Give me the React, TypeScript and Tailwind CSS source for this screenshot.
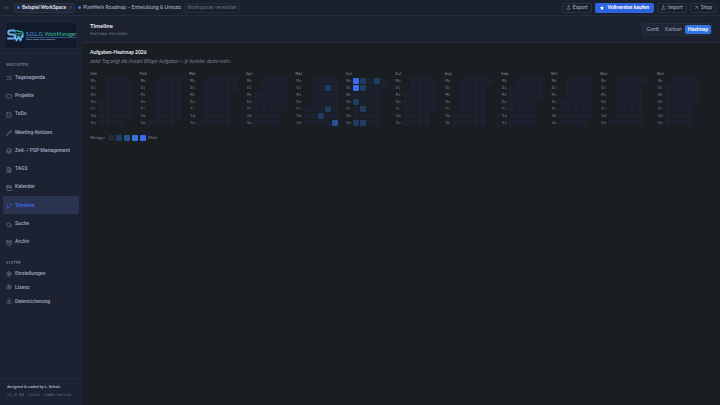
import React, { useState } from 'react';
import {
    Archive,
    ArrowUpRight,
    Calendar,
    Download,
    FileText,
    Folder,
    GitBranch,
    Layers,
    ListChecks,
    type LucideIcon,
    Pencil,
    Search,
    Settings,
    SquareCheck,
    Star,
    Upload,
} from 'lucide-react';

const YEAR = 2026;
const MONTHS = ['Jan', 'Feb', 'Mär', 'Apr', 'Mai', 'Jun', 'Jul', 'Aug', 'Sep', 'Okt', 'Nov', 'Dez'];
const WEEKDAYS = ['Mo', 'Di', 'Mi', 'Do', 'Fr', 'Sa', 'So'];

const LEVELS = ['bg-[#1c212f]', 'bg-[#1f3d61]', 'bg-[#24528c]', 'bg-[#3474dc]', 'bg-[#3b6cf0]'];

// load level per day, keyed by "month-day"
const LOAD: Record<string, number> = {
    '4-16': 1,
    '4-19': 1,
    '4-22': 1,
    '4-31': 2,
    '5-1': 4,
    '5-2': 4,
    '5-4': 1,
    '5-7': 1,
    '5-8': 1,
    '5-9': 1,
    '5-12': 1,
    '5-14': 1,
    '5-22': 1,
};

const VIEWS: { label: string; icon: LucideIcon }[] = [
    { label: 'Tagesagenda', icon: ListChecks },
    { label: 'Projekte', icon: Folder },
    { label: 'ToDo', icon: SquareCheck },
    { label: 'Meeting-Notizen', icon: Pencil },
    { label: 'Zeit- / PSP Management', icon: Layers },
    { label: 'TAGS', icon: FileText },
    { label: 'Kalender', icon: Calendar },
    { label: 'Timeline', icon: GitBranch },
    { label: 'Suche', icon: Search },
    { label: 'Archiv', icon: Archive },
];

const SYSTEM: { label: string; icon: LucideIcon }[] = [
    { label: 'Einstellungen', icon: Settings },
    { label: 'Lizenz', icon: Settings },
    { label: 'Datensicherung', icon: Download },
];

const Logo: React.FC = () => (
    <div className="flex h-[27px] items-center gap-[2px] rounded-[2px] border border-[#1a2236] bg-[#101a2c] pl-[1px]">
        <svg viewBox="0 0 34 26" className="h-[13px] w-[17px] shrink-0" fill="none" strokeLinecap="round" strokeLinejoin="round">
            <path d="M15 3H7C1 3 1 11 7 11h5c6 0 6 8 0 8H2" stroke="#6fb0f2" strokeWidth="4" />
            <path d="M16 6c3-4 7-3 8-1h5c2 0 3 2 3 5v6" stroke="#2fae91" strokeWidth="2.5" />
            <path d="M18 9h13v6H20z" fill="#15434f" stroke="#2fae91" strokeWidth="1.2" />
            <path d="M15 14l4 9 4-7 4 7 4-10" stroke="#6fb0f2" strokeWidth="3.4" />
        </svg>
        <div className="whitespace-nowrap">
            <p className="text-[5px] leading-[6px] text-[#62a6ee]">
                S.O.L.O. <span className="text-[#3cc4a0]">WorkManager</span>
            </p>
            <p className="border-t border-[#2c5c83] text-[2px] leading-[3px] font-bold text-[#a3b5cc]">
                Simple, Offline, Local, Organized
            </p>
        </div>
    </div>
);

const Sidebar: React.FC = () => (
    <aside className="flex w-[83px] shrink-0 flex-col border-r border-[#191f2b] bg-[#1c2232]">
        <div className="border-b border-[#232a3b] px-[5px] pt-[6px] pb-[4px]">
            <Logo />
        </div>
        <h2 className="px-[6px] pt-[9px] font-['DejaVu_Sans_Mono',monospace] text-[4px] leading-[4px] text-[#8791a8]">ANSICHTEN</h2>
        <nav className="mt-[1px] grid h-[183px] auto-rows-fr px-[3px] font-['Roboto',sans-serif]">
            {VIEWS.map(({ label, icon: Icon }) => (
                <a
                    key={label}
                    href={`#${label.toLowerCase()}`}
                    className={
                        label === 'Timeline'
                            ? 'flex items-center gap-[3px] rounded-[2px] bg-[#2a3350] pl-[3px] text-[#3d6cf0]'
                            : 'flex items-center gap-[3px] rounded-[2px] pl-[3px] text-[#a0aac0]'
                    }
                >
                    <Icon className="mt-[2px] size-[6px] opacity-80" />
                    <span className="text-[5px] leading-[7px] font-medium whitespace-nowrap">{label}</span>
                </a>
            ))}
        </nav>
        <h2 className="px-[6px] pt-[10px] font-['DejaVu_Sans_Mono',monospace] text-[4px] leading-[4px] text-[#8791a8]">SYSTEM</h2>
        <nav className="mt-[2px] grid h-[41px] auto-rows-fr px-[3px] font-['Roboto',sans-serif]">
            {SYSTEM.map(({ label, icon: Icon }) => (
                <a key={label} href={`#${label.toLowerCase()}`} className="flex items-center gap-[3px] pl-[3px] text-[#a0aac0]">
                    <Icon className="size-[6px] opacity-80" />
                    <span className="text-[5px] leading-[7px] font-medium">{label}</span>
                </a>
            ))}
        </nav>
        <footer className="mt-auto border-t border-[#232a3b] px-[7px] pt-[5px] pb-[8px] whitespace-nowrap">
            <p className="text-[4px] leading-[6px] font-bold text-[#a9b2c5]">designed &amp; coded by L. Scholz</p>
            <p className="mt-[3px] flex gap-px font-['DejaVu_Sans_Mono',monospace] text-[4px] leading-[4px] text-[#667088]">
                <span>v1.0.50</span>
                <span>·</span>
                <span>local</span>
                <span>·</span>
                <a href="#notice">made-notice</a>
            </p>
        </footer>
    </aside>
);

const ToolButton: React.FC<{ label: string; icon: LucideIcon }> = ({ label, icon: Icon }) => (
    <button className="flex h-[10px] items-center gap-[2px] rounded-[2px] border border-[#2a3142] px-[3px] text-[5px] leading-[7px] font-medium text-[#a9b2c5]">
        <Icon className="size-[5px]" />
        {label}
    </button>
);

const TopBar: React.FC = () => (
    <header className="flex h-[16px] shrink-0 items-center border-b border-[#252c3c] bg-[#1b202d] px-[4px] whitespace-nowrap">
        <span className="w-[10px] font-['DejaVu_Sans_Mono',monospace] text-[4px] text-[#4c556a]">WS:</span>
        <button className="flex h-[10px] items-center gap-[2px] rounded-[2px] border border-[#2c3447] bg-[#212738] px-[2px] text-[5px] leading-[7px] font-bold text-[#e3e8f2]">
            <span className="size-[3px] rounded-full bg-[#3f7cf0]" />
            Beispiel WorkSpace
            <Pencil className="size-[4px] text-[#6d778e]" />
        </button>
        <button className="ml-[3px] flex items-center gap-[2px] text-[5px] leading-[7px] font-medium text-[#a9b2c5]">
            <span className="size-[3px] rounded-full bg-[#3f7cf0]" />
            PlanWerk Roadmap – Entwicklung &amp; Umsatz
        </button>
        <button className="ml-[3px] h-[10px] rounded-[2px] border border-[#242b3a] px-[2px] text-[5px] leading-[7px] text-[#69738a]">
            Workspaces verwalten
        </button>
        <div className="ml-auto flex gap-[3px]">
            <ToolButton label="Export" icon={Upload} />
            <button className="flex h-[10px] items-center gap-[4px] rounded-[2px] bg-[#2f62dd] px-[5px] text-[5px] leading-[7px] font-black text-white">
                <Star className="size-[4px] fill-current" />
                Vollversion kaufen
            </button>
            <ToolButton label="Import" icon={Upload} />
            <ToolButton label="Shop" icon={ArrowUpRight} />
        </div>
    </header>
);

const Month: React.FC<{ month: number }> = ({ month }) => {
    const offset = (new Date(YEAR, month, 1).getDay() + 6) % 7;
    const days = new Date(YEAR, month + 1, 0).getDate();

    return (
        <section className="font-['DejaVu_Sans_Mono',monospace]">
            <h3 className="text-[4px] leading-[5px] text-[#858e9c]">{MONTHS[month]}</h3>
            <div className="mt-[2px] flex gap-[2px]">
                <div className="grid w-[6px] grid-rows-7 gap-px pl-[1px]">
                    {WEEKDAYS.map(day => (
                        <span key={day} className="h-[6px] text-[4px] leading-[6px] text-[#707a8a]">{day}</span>
                    ))}
                </div>
                <div className="grid grid-flow-col grid-rows-7 gap-px">
                    {Array.from({ length: offset }, (_, i) => (
                        <span key={`empty-${i}`} className="size-[6px]" />
                    ))}
                    {Array.from({ length: days }, (_, i) => (
                        <span key={i} className={`size-[6px] rounded-[1px] ${LEVELS[LOAD[`${month}-${i + 1}`] ?? 0]}`} />
                    ))}
                </div>
            </div>
        </section>
    );
};

const App: React.FC = () => {
    const [mode, setMode] = useState('Heatmap');

    return (
        <div className="flex min-h-screen flex-col bg-[#191e22] font-['Lato','Noto_Sans',sans-serif]">
            <TopBar />
            <div className="flex flex-1">
                <Sidebar />
                <div className="min-w-0 flex-1">
                    <header className="flex h-[27px] items-center justify-between border-b border-[#252b38] bg-[#1c212e] pr-[8px] pl-[7px]">
                        <div>
                            <h1 className="text-[6px] leading-[8px] font-bold text-[#e6eaf2]">Timeline</h1>
                            <p className="mt-[1px] font-['DejaVu_Sans_Mono',monospace] text-[4px] leading-[6px] text-[#717b90]">Heatmap-Kalender</p>
                        </div>
                        <div className="flex rounded-[2px] border border-[#252c3c] bg-[#202636] py-px pl-[1px]">
                            {['Gantt', 'Kanban', 'Heatmap'].map(name => (
                                <button
                                    key={name}
                                    onClick={() => setMode(name)}
                                    className={
                                        name === mode
                                            ? 'h-[9px] rounded-[2px] bg-[#3474e0] px-[3px] text-[5px] leading-[7px] font-bold text-white'
                                            : 'h-[9px] px-[3px] text-[5px] leading-[7px] font-medium text-[#98a2b6]'
                                    }
                                >
                                    {name}
                                </button>
                            ))}
                        </div>
                    </header>
                    <main className="pt-[6px] pr-[21px] pl-[7px]">
                        <h2 className="text-[5px] leading-[7px] font-bold text-[#e6eaf2]">Aufgaben-Heatmap {YEAR}</h2>
                        <p className="mt-[2px] text-[5px] leading-[7px] text-[#717a8d] italic">
                            Jeder Tag zeigt die Anzahl fälliger Aufgaben — je dunkler, desto mehr.
                        </p>
                        <div className="mt-[6px] flex justify-between">
                            {MONTHS.map((name, month) => (
                                <Month key={name} month={month} />
                            ))}
                        </div>
                        <div className="mt-[9px] flex items-center gap-[2px] text-[4px] leading-[6px] text-[#858e9c]">
                            <span className="w-[16px]">Weniger</span>
                            {LEVELS.map((level, i) => (
                                <span key={level} className={`size-[6px] rounded-[1px] ${i === 0 ? 'bg-[#252b36]' : level}`} />
                            ))}
                            <span>Mehr</span>
                        </div>
                    </main>
                </div>
            </div>
        </div>
    );
};

export default App;
